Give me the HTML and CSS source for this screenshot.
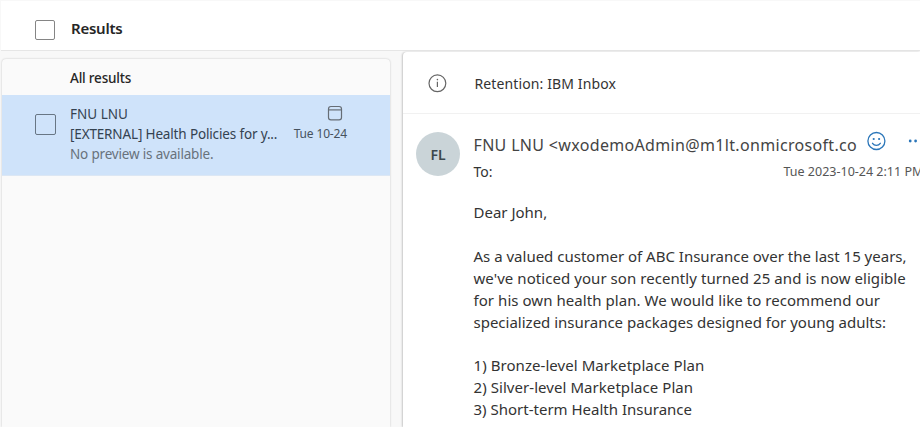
FILE: index.html
```html
<!DOCTYPE html>
<html lang="en">
<head>
<meta charset="utf-8">
<title>Results</title>
<link rel="stylesheet" href="styles.css">
</head>
<body>
<div class="app">
  <header class="topbar">
    <span class="checkbox"></span>
    <h1 class="topbar-title">Results</h1>
  </header>
  <main class="columns">
    <section class="list">
      <h2 class="list-heading">All results</h2>
      <article class="item">
        <span class="checkbox item-check"></span>
        <div class="item-text">
          <div class="sender">FNU LNU</div>
          <div class="subject">[EXTERNAL] Health Policies for y...</div>
          <div class="preview">No preview is available.</div>
        </div>
        <div class="item-meta">
          <svg class="calendar" width="16" height="16" viewBox="0 0 16 16" fill="none" stroke="#666d75" stroke-width="1.2"><rect x="1.5" y="1.5" width="13" height="13.4" rx="2.4"/><path d="M1.5 4.9h13"/></svg>
          <span class="item-date">Tue 10-24</span>
        </div>
      </article>
    </section>
    <section class="reader">
      <div class="retention">
        <svg class="info" width="20" height="20" viewBox="0 0 20 20" fill="none" stroke="#666" stroke-width="1.2"><circle cx="10.4" cy="10.3" r="8.4"/><path d="M10.4 8.8v5.2"/><circle cx="10.4" cy="6.6" r=".8" fill="#666" stroke="none"/></svg>
        <span class="retention-text">Retention: IBM Inbox</span>
      </div>
      <div class="message">
        <div class="avatar">FL</div>
        <div class="content">
          <div class="from-row">
            <div class="from">FNU LNU &lt;wxodemoAdmin@m1lt.onmicrosoft.co</div>
            <svg class="smile" width="20" height="20" viewBox="0 0 20 20" fill="none" stroke="#2b76b9" stroke-width="1.3" stroke-linecap="round"><circle cx="10.4" cy="10" r="8.5"/><path d="M6.5 12.3c1.9 2.7 5.9 2.7 7.8 0"/><circle cx="7.7" cy="8" r="1.1" fill="#2b76b9" stroke="none"/><circle cx="13.1" cy="8" r="1.1" fill="#2b76b9" stroke="none"/></svg>
            <svg class="more" width="10" height="4" viewBox="0 0 10 4" fill="#2b76b9"><circle cx="2.2" cy="2" r="1.4"/><circle cx="7.6" cy="2" r="1.4"/></svg>
          </div>
          <div class="to-row"><span class="to">To:</span><time class="sent">Tue 2023-10-24 2:11 PM</time></div>
          <div class="body">
            <p>Dear John,</p>
            <p>As a valued customer of ABC Insurance over the last 15 years,<br><span class="loose">we've noticed your son recently turned 25 and is now eligible</span><br><span class="loose">for his own health plan. We would like to recommend our</span><br>specialized insurance packages designed for young adults:</p>
            <p class="loose">1) Bronze-level Marketplace Plan<br>2) Silver-level Marketplace Plan<br><span class="plain">3) Short-term Health Insurance</span></p>
          </div>
        </div>
      </div>
    </section>
  </main>
</div>
</body>
</html>
```
FILE: styles.css
```css
* { box-sizing: border-box; }
body {
  margin: 0;
  background: #f8f8f8;
  color: #333;
  font-family: "Noto Sans", "Open Sans", sans-serif;
  overflow: hidden;
}
h1, h2, p { margin: 0; }
svg { display: block; flex: none; }
.app { height: 427px; display: flex; flex-direction: column; overflow: hidden; }
.topbar {
  flex: none;
  height: 50px;
  margin: 1px 0 0 1px;
  padding: 8px 0 0 34px;
  display: flex;
  align-items: center;
  background: #fff;
  border-bottom: 1px solid #e6e6e6;
}
.checkbox {
  flex: none;
  width: 20px;
  height: 20px;
  border: 1px solid #858585;
  border-radius: 2px;
}
.topbar-title { margin-left: 16px; padding-bottom: 3px; font-size: 15px; font-weight: 600; letter-spacing: -.25px; color: #262626; }
.columns { flex: 1; display: flex; min-height: 0; padding-left: 2px; }
.list {
  flex: none;
  width: 388px;
  margin-top: 8px;
  background: #fafafa;
  border-radius: 4px 4px 0 0;
  box-shadow: 0 0 2px rgba(0, 0, 0, .24);
}
.list-heading {
  height: 36px;
  padding-left: 68px;
  font-size: 13.5px;
  line-height: 38px;
  font-weight: 500;
  letter-spacing: -.2px;
  color: #262626;
}
.item { display: flex; height: 81px; padding-left: 33px; background: #cfe3fa; border-bottom: 1px solid #dce7f4; }
.item-check { margin-top: 19px; width: 21px; height: 21px; border-color: #687684; }
.item-text { width: 208px; margin-left: 14px; padding-top: 9px; font-size: 13.5px; line-height: 20px; color: #344250; white-space: nowrap; }
.subject { letter-spacing: -.15px; }
.preview { letter-spacing: -.18px; color: #68727c; }
.item-meta { width: 69px; padding-top: 10px; display: flex; flex-direction: column; align-items: flex-end; }
.calendar { margin-right: 4px; }
.item-date { margin-top: 4px; font-size: 12px; line-height: 18px; letter-spacing: -.15px; color: #46525e; white-space: nowrap; }
.reader {
  flex: none;
  width: 517px;
  margin: 1px 0 0 13px;
  background: #fff;
  border-radius: 4px 0 0 0;
  box-shadow: -1px 0 2px rgba(0, 0, 0, .2);
}
.retention { height: 62px; padding: 0 0 0 24px; display: flex; align-items: center; border-bottom: 1px solid #f1f1f1; }
.retention-text { margin-left: 27.5px; padding-top: 3px; font-size: 14px; line-height: 20px; letter-spacing: .12px; color: #333; }
.message { display: flex; padding-left: 13px; }
.avatar { flex: none; width: 44px; height: 44px; margin-top: 18px; border-radius: 50%; background: #cad4d8; color: #3c484c; font-size: 14px; font-weight: 600; line-height: 45px; text-align: center; }
.content { flex: none; width: 460px; margin-left: 13.5px; }
.from-row { display: flex; height: 46px; padding-top: 16px; }
.from { flex: none; width: 384px; white-space: nowrap; font-size: 16px; line-height: 30px; letter-spacing: .33px; color: #444; }
.smile { margin: 1px 0 0 8.5px; }
.more { margin: 9px 0 0 22px; }
.to-row { display: flex; height: 24px; line-height: 23px; white-space: nowrap; font-size: 14px; }
.to { width: 310px; }
.sent { font-size: 12.5px; line-height: 24px; color: #555; }
.body { padding-top: 18px; font-size: 15px; line-height: 21.9px; white-space: nowrap; color: #333; }
.body p { margin-bottom: 21.9px; }
.loose { letter-spacing: .06px; }
.plain { letter-spacing: 0; }
```
